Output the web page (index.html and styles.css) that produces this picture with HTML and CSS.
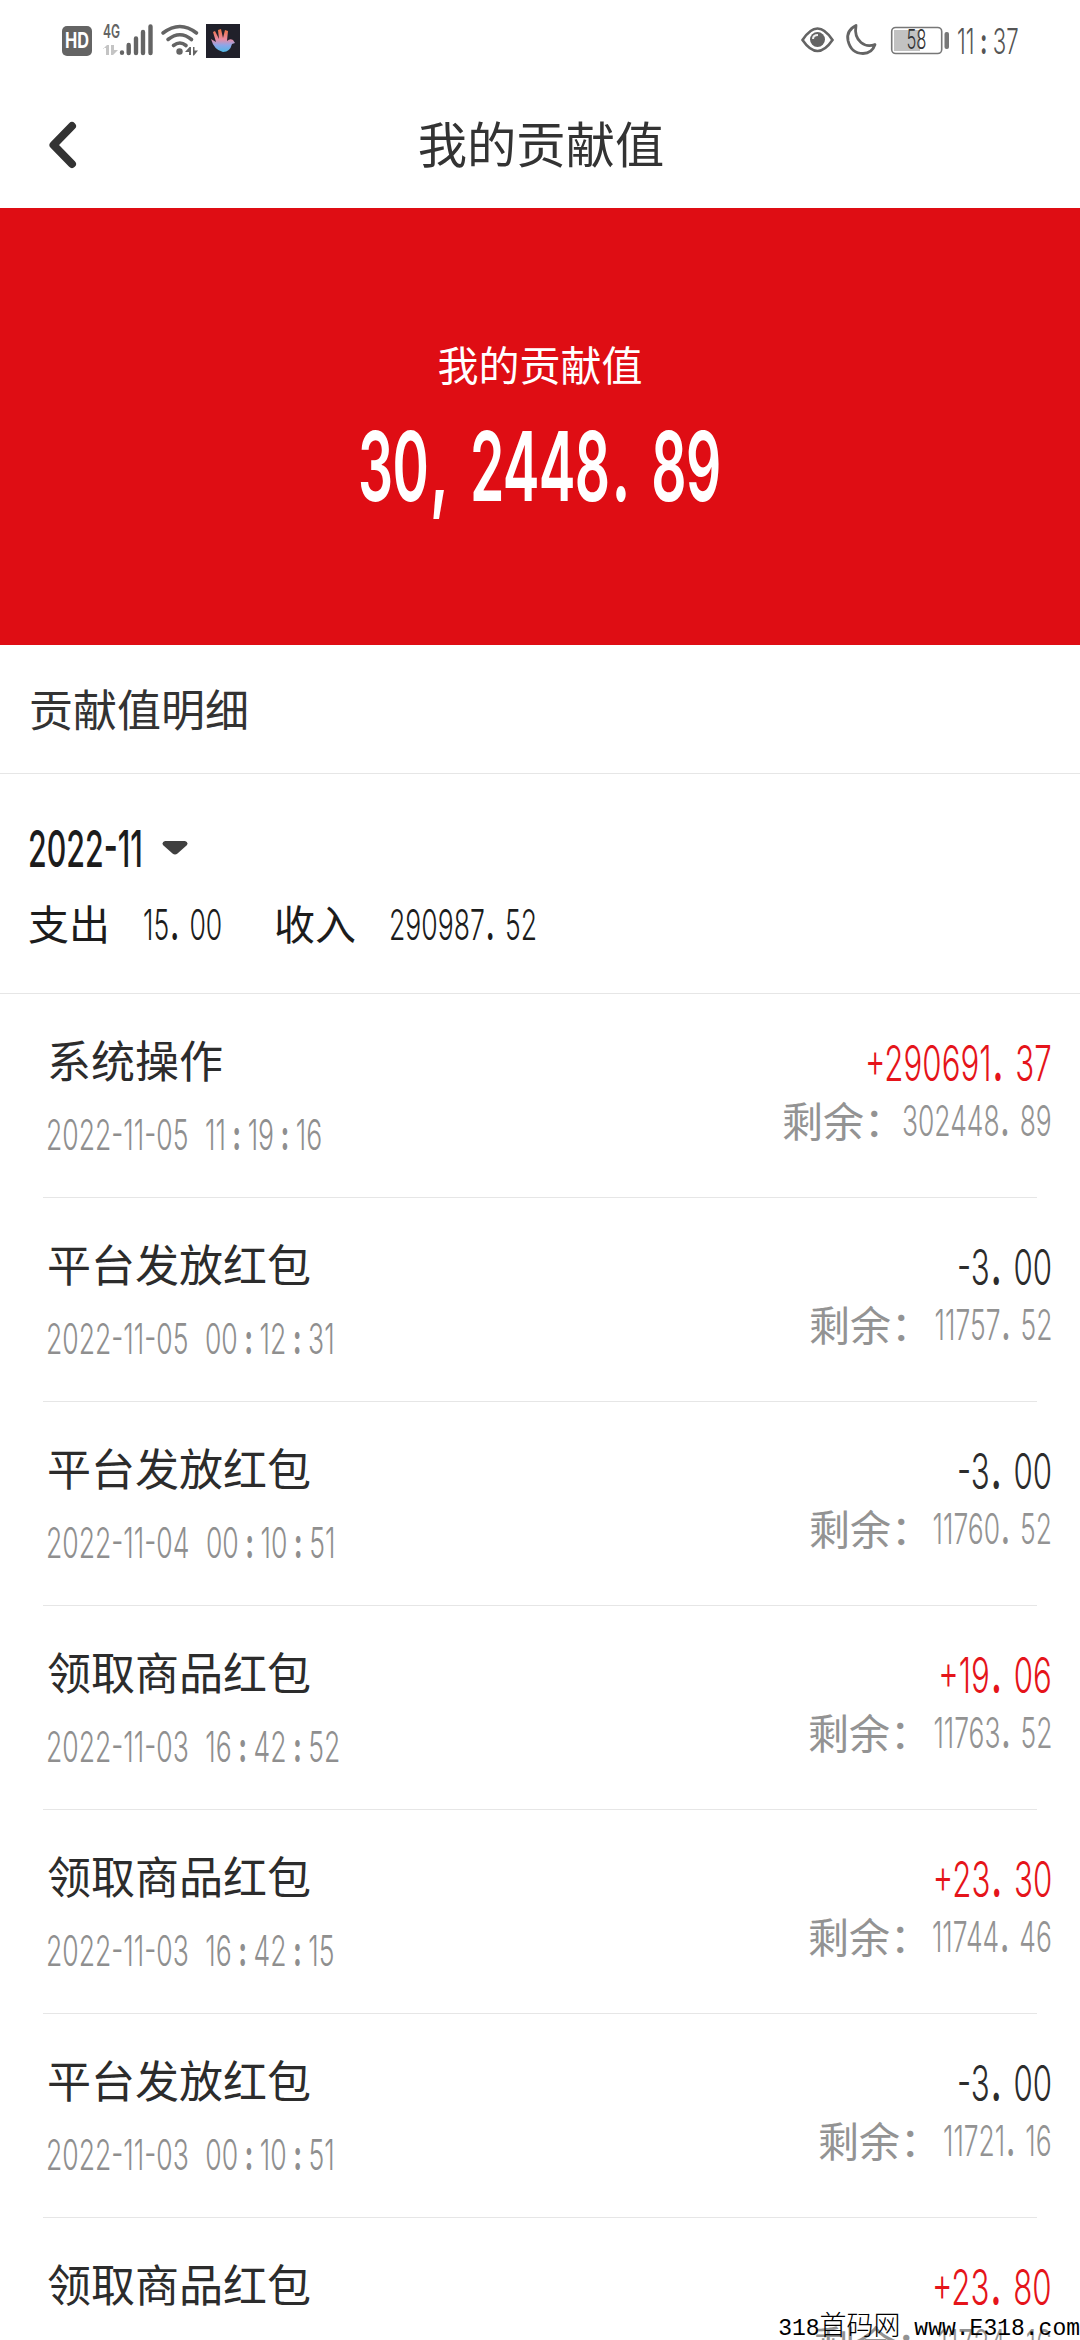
FILE: index.html
```html
<!DOCTYPE html>
<html lang="zh-CN">
<head>
<meta charset="utf-8">
<title>我的贡献值</title>
<link rel="stylesheet" href="styles.css">
</head>
<body>
<div class="screen">
  <div class="status">
    <svg class="status-left" width="200" height="60" viewBox="40 10 200 60">
      <rect x="62" y="26" width="30" height="30" rx="5" fill="#646464"/>
      <text x="77" y="48" class="hd" textLength="24" lengthAdjust="spacingAndGlyphs">HD</text>
      <text x="103" y="38" class="net" textLength="17" lengthAdjust="spacingAndGlyphs">4G</text>
      <g fill="#c4c4c4"><path d="M103 49l4-4h2v10h-3v-7h-3zM111 45h3v5h4l-5 5h-2z"/></g>
      <g stroke="#646464" stroke-width="4.4" stroke-linecap="round"><path d="M122 52.500v.3M128.700 45v8M136 38.500v14.500M143 32v21M150.500 26.500v26.500"/></g>
      <g fill="none" stroke="#646464" stroke-width="3.600" stroke-linecap="round"><path d="M163 33q17-13 33.500 0M168 39.500q12-9.500 23.500 0M173.500 45.500q6.500-5 12.500 0"/></g>
      <circle cx="179.500" cy="51.500" r="3.200" fill="#646464"/>
      <path d="M185 52l4.500-5h1.500v8h-2v-3zM193 47h1.500v3.500h3.500l-4 5h-1z" fill="#646464"/>
      <defs><linearGradient id="bird" x1="0" y1="0" x2="0" y2="1"><stop offset="0" stop-color="#f0703c"/><stop offset=".45" stop-color="#e88ca4"/><stop offset=".7" stop-color="#8fa5e8"/><stop offset="1" stop-color="#4fb8e4"/></linearGradient></defs>
      <rect x="206" y="24" width="34" height="34" fill="#20202a"/>
      <path d="M211 39l5 3-3-10 2-1 4 8-1-9 3-1 2 9 2-8 3 1-1 10q3-3 6-1l2 3-3 1q-2 8-9 8-9-2-12-13z" fill="url(#bird)"/>
    </svg>
    <div class="status-right">
      <svg width="150" height="60" viewBox="800 10 150 60">
        <path d="M801.500 40q15-23 30 0-15 22-30 0z" fill="none" stroke="#646464" stroke-width="2.600"/>
        <circle cx="816.500" cy="39.500" r="7.500" fill="#646464"/><path d="M812 39q0-4 5-4" stroke="#eee" stroke-width="2" fill="none"/>
        <path d="M855 25.500q-10 5-8 15 3 13 15 13 9 0 12-9-8 3-14-2-7-6-5-17z" fill="none" stroke="#646464" stroke-width="2.800" stroke-linejoin="round"/>
        <rect x="890.700" y="27.500" width="50" height="26" rx="4" fill="#fff" stroke="#777" stroke-width="1.600"/>
        <rect x="893" y="30" width="26" height="21" fill="#c2c2c2"/>
        <text x="905.500" y="49" class="level" textLength="20" lengthAdjust="spacingAndGlyphs">58</text>
        <rect x="943.500" y="32" width="4.500" height="17" rx="2" fill="#777"/>
      </svg>
      <span class="num clock" style="width:62px"><span>11<i class="colon">:</i>37</span></span>
    </div>
  </div>

  <header class="nav">
    <svg class="back" width="34" height="52" viewBox="0 0 34 52"><path d="M27 7L8.500 26 27 45" fill="none" stroke="#333" stroke-width="8" stroke-linecap="round" stroke-linejoin="round"/></svg>
    <h1>我的贡献值</h1>
  </header>

  <section class="hero">
    <div class="hero-label">我的贡献值</div>
    <div class="num total" style="width:364px"><span>30<i class="dot">,</i>2448<i class="dot">.</i>89</span></div>
  </section>

  <h2 class="section-title">贡献值明细</h2>

  <section class="summary">
    <div class="month"><span class="num" style="width:114px"><span>2022-11</span></span>
      <svg width="26" height="14" viewBox="0 0 26 14"><path d="M3 0h20q4 1.500 1.500 4.500L15.500 12.500q-2.500 2-5 0L1.500 4.500Q-1 1.500 3 0z" fill="#404040"/></svg>
    </div>
    <div class="sums">
      <span>支出</span><span class="num" style="width:78px"><span>15<i class="dot">.</i>00</span></span>
      <span class="income">收入</span><span class="num" style="width:146px"><span>290987<i class="dot">.</i>52</span></span>
    </div>
  </section>

  <main class="list">
    <article class="row"><div><h3>系统操作</h3><div class="num date"><span>2022-11-05 11<i class="colon">:</i>19<i class="colon">:</i>16</span></div></div>
      <div class="side"><div class="num amount plus"><span>+290691<i class="dot">.</i>37</span></div><div class="rest">剩余：<span class="num" style="width:147px"><span>302448<i class="dot">.</i>89</span></span></div></div></article>
    <article class="row"><div><h3>平台发放红包</h3><div class="num date"><span>2022-11-05 00<i class="colon">:</i>12<i class="colon">:</i>31</span></div></div>
      <div class="side"><div class="num amount"><span>-3<i class="dot">.</i>00</span></div><div class="rest">剩余：<span class="num" style="width:120px"><span>11757<i class="dot">.</i>52</span></span></div></div></article>
    <article class="row"><div><h3>平台发放红包</h3><div class="num date"><span>2022-11-04 00<i class="colon">:</i>10<i class="colon">:</i>51</span></div></div>
      <div class="side"><div class="num amount"><span>-3<i class="dot">.</i>00</span></div><div class="rest">剩余：<span class="num" style="width:120px"><span>11760<i class="dot">.</i>52</span></span></div></div></article>
    <article class="row"><div><h3>领取商品红包</h3><div class="num date"><span>2022-11-03 16<i class="colon">:</i>42<i class="colon">:</i>52</span></div></div>
      <div class="side"><div class="num amount plus"><span>+19<i class="dot">.</i>06</span></div><div class="rest">剩余：<span class="num" style="width:121px"><span>11763<i class="dot">.</i>52</span></span></div></div></article>
    <article class="row"><div><h3>领取商品红包</h3><div class="num date"><span>2022-11-03 16<i class="colon">:</i>42<i class="colon">:</i>15</span></div></div>
      <div class="side"><div class="num amount plus"><span>+23<i class="dot">.</i>30</span></div><div class="rest">剩余：<span class="num" style="width:121px"><span>11744<i class="dot">.</i>46</span></span></div></div></article>
    <article class="row"><div><h3>平台发放红包</h3><div class="num date"><span>2022-11-03 00<i class="colon">:</i>10<i class="colon">:</i>51</span></div></div>
      <div class="side"><div class="num amount"><span>-3<i class="dot">.</i>00</span></div><div class="rest">剩余：<span class="num" style="width:111px"><span>11721<i class="dot">.</i>16</span></span></div></div></article>
    <article class="row"><div><h3>领取商品红包</h3></div>
      <div class="side"><div class="num amount plus"><span>+23<i class="dot">.</i>80</span></div><div class="rest">剩余：<span class="num" style="width:115px"><span>11724<i class="dot">.</i>16</span></span></div></div></article>
  </main>
  <div class="watermark">318<b>首码网</b> www.E318.com</div>
</div>
</body>
</html>
```
FILE: styles.css
```css
* { box-sizing: border-box; }
body { margin: 0; background: #fff; }
h1, h2, h3 { margin: 0; font-weight: 400; }
i { font-style: normal; }

.screen {
  position: relative;
  width: 1080px;
  height: 2340px;
  overflow: hidden;
  background: #fff;
  color: #2c2c2c;
  font-family: "Noto Sans CJK SC", sans-serif;
  font-weight: 400;
}

/* condensed figures: the box has the drawn width, the inner text is squeezed */
.num { --squeeze: .62; display: inline-block; white-space: nowrap; font-family: Inter, sans-serif; font-weight: 300; }
.num > span { display: inline-block; transform: scaleX(var(--squeeze)); transform-origin: left center; word-spacing: .34em; }
.dot, .colon { display: inline-block; font-weight: 700; }
.dot { width: .76em; padding-left: .04em; text-align: left; }
.colon { width: .82em; text-align: center; }

.status { display: flex; justify-content: space-between; height: 80px; padding: 10px 61px 10px 40px; }
.status-right { display: flex; gap: 6px; }
.clock { --squeeze: .635; font-size: 35px; line-height: 62px; color: #555; }
.hd { font: 700 21px Inter, sans-serif; fill: #fff; text-anchor: middle; }
.net { font: 600 19px Inter, sans-serif; fill: #646464; }
.level { font: 300 27px Inter, sans-serif; fill: #333; }

.nav { display: grid; grid-template-columns: 78px 1fr 78px; align-items: center; height: 128px; }
.back { margin: 2px 0 0 45px; }
.nav h1 { text-align: center; font-size: 49.300px; line-height: 124px; height: 128px; padding-left: 2px; color: #333; }

.hero { height: 437px; padding-top: 125px; background: #df0d14; color: #fff; text-align: center; }
.hero-label { font-size: 41px; line-height: 60px; }
.total { --squeeze: .574; margin-top: 3px; font-size: 96px; line-height: 140px; text-align: left; }
.total, .total > span { font-weight: 600; }
.total > span { letter-spacing: -.012em; }

.section-title { height: 129px; padding-left: 29px; border-bottom: 1px solid #e6e6e6; font-size: 44px; line-height: 127px; color: #333; }

.summary { height: 220px; padding: 45px 0 0 28px; border-bottom: 1px solid #e6e6e6; color: #1c1c1c; }
.month { display: flex; align-items: center; gap: 20px; height: 60px; }
.month .num { --squeeze: .595; font-size: 51px; font-weight: 500; line-height: 60px; }
.month svg { margin-top: -3px; }
.sums { display: flex; align-items: center; height: 60px; margin-top: 14px; font-size: 41px; }
.sums > span:not(.num) { margin-top: -2px; }
.sums .num { --squeeze: .625; margin: 2px 0 0 33px; font-size: 42.500px; }
.sums .income { margin-left: 53px; }

.row { display: flex; justify-content: space-between; height: 204px; margin: 0 43px; padding: 33px 0 0 4px; border-bottom: 1px solid #e6e6e6; }
.row h3 { font-size: 44px; line-height: 64px; }
.date { --squeeze: .625; margin: 14px 0 0 -1px; font-size: 42.500px; line-height: 60px; color: #8f8f8f; }
.side { margin-right: -15px; padding-top: 5px; text-align: right; }
.side .num { display: flex; justify-content: flex-end; }
.side .num > span { flex: none; transform-origin: right center; }
.amount { --squeeze: .638; height: 64px; font-size: 49px; line-height: 64px; }
.side .plus { color: #e5141a; }
.rest { display: flex; justify-content: flex-end; margin-top: -7px; font-size: 41px; line-height: 60px; color: #939393; }
.rest .num { --squeeze: .622; padding-top: 2px; font-size: 42.500px; }

.watermark { position: absolute; right: 0; bottom: -6px; font: 23px/34px "Liberation Mono", monospace; color: #000; white-space: pre; }
.watermark b { font: 300 27px/34px "Noto Sans CJK SC", sans-serif; }
```
